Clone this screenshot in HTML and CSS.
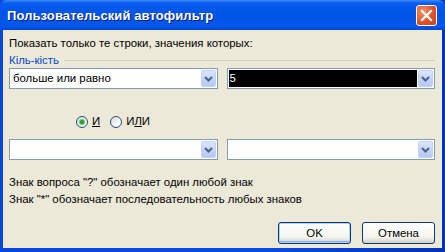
FILE: index.html
```html
<!DOCTYPE html>
<html lang="ru">
<head>
    <meta charset="UTF-8">
    <title>Пользовательский автофильтр</title>
    <link rel="stylesheet" href="styles.css">
</head>
<body>
    <div class="window">
        <div class="titlebar">
            <span class="title">Пользовательский автофильтр</span>
            <button class="close-btn" aria-label="Закрыть">
                <svg width="13" height="13" viewBox="0 0 13 13">
                    <path d="M2 2L11 11M11 2L2 11" stroke="#fff" stroke-width="2.2" stroke-linecap="square"></path>
                </svg>
            </button>
        </div>

        <div class="client">
            <p class="intro">Показать только те строки, значения которых:</p>

            <div class="group">
                <span class="group-label">Кіль-кість</span>
                <span class="group-line"></span>
            </div>

            <div class="combo-row">
                <div class="combo">
                    <span class="combo-value">больше или равно</span>
                    <span class="combo-btn">
                        <svg width="9" height="6" viewBox="0 0 9 6"><path d="M1 1L4.5 4.5L8 1" fill="none" stroke="#4d6185" stroke-width="2"></path></svg>
                    </span>
                </div>
                <div class="combo">
                    <span class="combo-value selected">5</span>
                    <span class="combo-btn">
                        <svg width="9" height="6" viewBox="0 0 9 6"><path d="M1 1L4.5 4.5L8 1" fill="none" stroke="#4d6185" stroke-width="2"></path></svg>
                    </span>
                </div>
            </div>

            <div class="radio-row">
                <label class="radio">
                    <span class="radio-dot checked"></span>
                    <span><u>И</u></span>
                </label>
                <label class="radio">
                    <span class="radio-dot"></span>
                    <span>И<u>Л</u>И</span>
                </label>
            </div>

            <div class="combo-row second">
                <div class="combo">
                    <span class="combo-value"></span>
                    <span class="combo-btn">
                        <svg width="9" height="6" viewBox="0 0 9 6"><path d="M1 1L4.5 4.5L8 1" fill="none" stroke="#4d6185" stroke-width="2"></path></svg>
                    </span>
                </div>
                <div class="combo">
                    <span class="combo-value"></span>
                    <span class="combo-btn">
                        <svg width="9" height="6" viewBox="0 0 9 6"><path d="M1 1L4.5 4.5L8 1" fill="none" stroke="#4d6185" stroke-width="2"></path></svg>
                    </span>
                </div>
            </div>

            <div class="notes">
                <p>Знак вопроса "?" обозначает один любой знак</p>
                <p>Знак "*" обозначает последовательность любых знаков</p>
            </div>

            <div class="buttons">
                <button class="btn default">OK</button>
                <button class="btn">Отмена</button>
            </div>
        </div>
    </div>
</body>
</html>
```

FILE: styles.css
```css
* {
    margin: 0;
    padding: 0;
    box-sizing: border-box;
}

body {
    background: #0742d8;
    font-family: 'Liberation Sans', Arial, sans-serif;
    font-size: 11.4px;
    color: #000;
}

.window {
    width: 445px;
    height: 252px;
    display: flex;
    flex-direction: column;
    background: linear-gradient(to right, #0a46dc 0%, #0a4ce0 60%, #0033b8 100%);
}

.titlebar {
    height: 30px;
    display: flex;
    align-items: center;
    justify-content: space-between;
    padding: 0 8px 0 7px;
    background: linear-gradient(to bottom, #3b8cf8 0%, #0a5cf0 10%, #0054e6 45%, #0058ea 85%, #0048d8 100%);
    border-radius: 6px 6px 0 0;
}

.title {
    color: #fff;
    font-weight: bold;
    font-size: 13px;
    text-shadow: 1px 1px 0 #0a1c7a;
    letter-spacing: 0.1px;
}

.close-btn {
    width: 21px;
    height: 21px;
    display: flex;
    align-items: center;
    justify-content: center;
    border: 1px solid #fff;
    border-radius: 3px;
    background: radial-gradient(circle at 30% 30%, #f0926e 0%, #e0522a 55%, #c4401c 100%);
    margin-top: 1px;
}

.client {
    flex: 1;
    margin: 0 3px 4px 3px;
    background: #ece9d8;
    padding: 7px 7px 0 6px;
    display: flex;
    flex-direction: column;
}

.intro {
    line-height: 13px;
}

.group {
    display: flex;
    align-items: center;
    margin-top: 3px;
    height: 13px;
    gap: 5px;
}

.group-label {
    color: #0046d5;
}

.group-line {
    flex: 1;
    height: 1px;
    background: #d0d0bf;
    margin-top: 1px;
}

.combo-row {
    display: flex;
    gap: 9px;
    margin-top: 2px;
}

.combo-row.second {
    margin-top: 11px;
}

.combo {
    flex: 1;
    height: 21px;
    display: flex;
    border: 1px solid #7f9db9;
    background: #fff;
    padding: 1px;
}

.combo-value {
    flex: 1;
    line-height: 17px;
    padding-left: 2px;
}

.combo-value.selected {
    background: #000;
    color: #fff;
    margin-right: 1px;
    padding-left: 1px;
}

.combo-btn {
    width: 15px;
    display: flex;
    align-items: center;
    justify-content: center;
    background: linear-gradient(to bottom, #dce6fd 0%, #c4d4fb 50%, #b6c8f5 100%);
    border: 1px solid #c3d1f5;
    border-radius: 2px;
}

.radio-row {
    display: flex;
    gap: 10px;
    height: 13px;
    margin-top: 26px;
    padding-left: 67px;
}

.radio {
    display: flex;
    align-items: center;
    gap: 4px;
    line-height: 13px;
}

.radio-dot {
    width: 12px;
    height: 12px;
    border-radius: 50%;
    border: 1px solid #1c5180;
    background: linear-gradient(135deg, #dcdcd6 0%, #f6f6f4 60%, #fff 100%);
    display: flex;
    align-items: center;
    justify-content: center;
}

.radio-dot.checked::after {
    content: '';
    width: 4px;
    height: 4px;
    border-radius: 50%;
    background: #21a121;
    box-shadow: 0 0 1px 1px #62c462;
}

.notes {
    margin-top: 14px;
    line-height: 17px;
}

.buttons {
    display: flex;
    justify-content: flex-end;
    gap: 11px;
    margin-top: 14px;
}

.btn {
    width: 73px;
    height: 22px;
    font-family: 'Liberation Sans', Arial, sans-serif;
    font-size: 11.4px;
    color: #000;
    border: 1px solid #003c74;
    border-radius: 3px;
    background: linear-gradient(to bottom, #ffffff 0%, #f4f4f0 70%, #d6d0c5 100%);
}

.btn.default {
    box-shadow: inset 0 0 0 1px #b8d0f8, inset 0 -1px 0 1px #89ade4;
}
```
